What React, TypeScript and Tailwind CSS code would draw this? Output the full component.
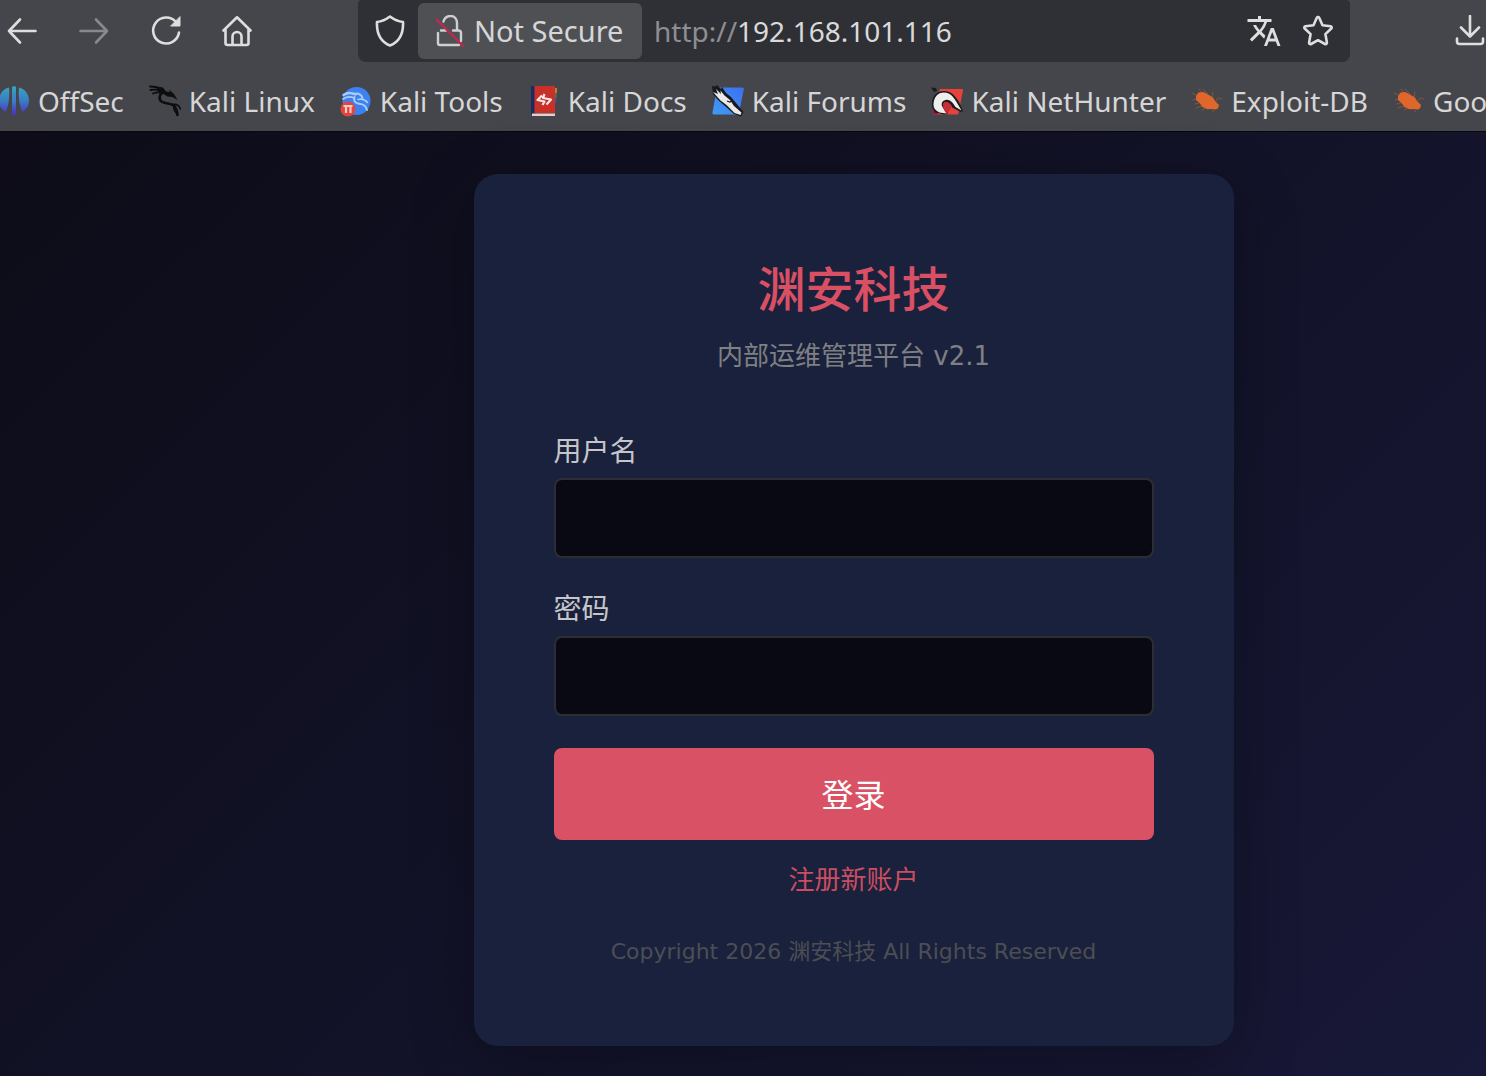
import type { ReactNode } from "react";
import { MdTranslate } from "react-icons/md";

function OffSecIcon() {
  return (
    <svg viewBox="0 0 32 32" className="size-8 shrink-0" aria-hidden="true">
      <defs>
        <linearGradient id="offsec" gradientUnits="userSpaceOnUse" x1="0" y1="1" x2="0" y2="31">
          <stop offset="0" stopColor="#3aa6bd" />
          <stop offset="0.5" stopColor="#3a7cc4" />
          <stop offset="1" stopColor="#5327c8" />
        </linearGradient>
      </defs>
      <path
        fill="url(#offsec)"
        d="M11 2.500C5 4 1 9 1 15.500c0 5 2.500 9 6.500 11.500C10.500 22 12 11 11 2.500zM21 2.500c6 1.500 10 6.500 10 13 0 5-2.500 9-6.500 11.500C21.500 22 20 11 21 2.500z"
      />
      <path fill="url(#offsec)" d="M14 1.500h4v18l-.3 10.500h-3.400L14 19.500z" />
    </svg>
  );
}

function KaliLinuxIcon() {
  return (
    <svg viewBox="0 0 32 32" className="size-8 shrink-0" aria-hidden="true">
      <g fill="none" stroke="#0d0d0f" strokeLinecap="round">
        <path strokeWidth="1.800" d="M1 1.500c5 0 8 .5 11 3M1.500 5c4-.8 7-.5 10 .5M4 8.500c3-1.200 5-1.500 8-1" />
        <path strokeWidth="2.600" d="M14 7c-4 3-4.500 7-1.500 9.500 3.500 2.500 8 1.500 11.500 3.500 3 2 4 5 4.500 10" />
        <path strokeWidth="1.600" d="M23 20c4-1.500 7 .5 8.500 4M25 22c-1 3 1 5 3 7" />
      </g>
      <path
        fill="#0d0d0f"
        d="M8 1.500l6 1 3 4 4 .5-1-2.500 5 4.500 3.500 6-5-3-5-.5-4-2.500-3 .5-3-4z"
      />
    </svg>
  );
}

function KaliToolsIcon() {
  return (
    <svg viewBox="0 0 32 32" className="size-8 shrink-0" aria-hidden="true">
      <circle cx="16.500" cy="16" r="14" fill="#3b82f0" />
      <g fill="none" stroke="#a9cbf5" strokeLinecap="round">
        <path strokeWidth="2.400" d="M3.500 10c4-3 8-2.500 12-.5" />
        <path strokeWidth="1.600" d="M3 14c4-2.500 8-2.500 11-1" />
        <path strokeWidth="2" d="M13 9c4-1 8 0 9.500 4M14.500 12c-1.500 5 2 6.500 6 7 4 .5 5.500 2 6.500 6" />
        <path strokeWidth="1.600" d="M18 14.500c4-1 7 0 9.500 3" />
      </g>
      <circle cx="8" cy="24" r="7.500" fill="#e2453e" />
      <path stroke="#f3c9c5" strokeWidth="2.200" fill="none" d="M3.500 21h9M6 21v7M10.500 21v7" />
    </svg>
  );
}

function KaliDocsIcon() {
  return (
    <svg viewBox="0 0 32 32" className="size-8 shrink-0" aria-hidden="true">
      <path fill="#c9762c" d="M26 3h3v5h-3z" />
      <path fill="#3f7f4c" d="M26 8h2.500v5H26z" />
      <path fill="#35569a" d="M26 13h2.500v5H26z" />
      <path fill="#1c2c5e" d="M3 1h6v29H3z" />
      <path fill="#c83028" d="M6.500 1H27v27H6.500z" />
      <path fill="#e2cfcf" d="M4 28.500h23V31H4z" />
      <path
        fill="none"
        stroke="#f6e9e8"
        strokeWidth="2.200"
        strokeLinejoin="round"
        d="M14 10.500L9.500 15l7 1.500-2 3.500M16.500 9l-1.500 4 8 1.500-4.500 5"
      />
    </svg>
  );
}

function KaliForumsIcon() {
  return (
    <svg viewBox="0 0 32 32" className="size-8 shrink-0" aria-hidden="true">
      <defs>
        <linearGradient id="forums" x1="0" y1="1" x2="1" y2="0">
          <stop offset="0" stopColor="#3f9cf5" />
          <stop offset="1" stopColor="#3c6ff0" />
        </linearGradient>
      </defs>
      <path
        fill="url(#forums)"
        d="M5 2.500h25.500c1 0 1.500.8 1.300 1.800L27 28c-.3 1-1 1.500-2 1.500H2.500C1 29.500.3 29 .5 27.500z"
      />
      <path fill="#17191f" d="M0 1l3 .5L5 0l4 4 1-2 4 6 5 4 5 6 7.500 9-2.500 4.500-7-2.500-9-8-7-6-5-6z" />
      <path
        fill="#e9e9e6"
        d="M1 7l5 2-2-5 5 5-.5-3.500 4 5L18 15l4 6 7.500 6.500-1 2.500-6-2-8-8-6-4.500-4-4.500z"
      />
      <path stroke="#17191f" strokeWidth="1.200" fill="none" d="M15 16l3 1 1.500-1" />
    </svg>
  );
}

function KaliNetHunterIcon() {
  return (
    <svg viewBox="0 0 32 32" className="size-8 shrink-0" aria-hidden="true">
      <path
        fill="#e8433b"
        d="M9 4h22c.8 0 1.200.6 1 1.400L27.500 28c-.2 1-.8 1.500-1.800 1.500H3c-1.500 0-2.300-1-2-2.500z"
      />
      <path fill="#8c1f48" d="M1.500 23l6 6.500H3c-1.500 0-2.300-1-2-2.500z" />
      <path fill="#1b1b1f" d="M0 2.500L5 3l1 3-3 1z" />
      <path
        fill="#1b1b1f"
        d="M1 22C0 12 5 6 13 6c8 0 11 5 15 11l4 9-2 1-8-4-5-5-4 1 1 5 3 5-4 .5-9-2z"
      />
      <path
        fill="#eeeeec"
        d="M2.500 20C2.500 12 7 7.500 13 7.500c7 0 10 5 14 12l3.500 6-6-3.500c-3-5-6-8-10-7-4 .8-4.500 4.500-3 7l4 6.500-7-1C4.500 25.500 2.500 23 2.500 20z"
      />
      <path fill="#c72c3b" d="M12.500 17.500c3-2 6 0 8.500 3.500l-3 5-2 3c-3-3-5-8-3.500-11.500z" />
    </svg>
  );
}

function ExploitIcon() {
  return (
    <svg viewBox="0 0 32 32" className="size-8 shrink-0" aria-hidden="true">
      <path
        fill="none"
        stroke="#86533c"
        strokeWidth="1"
        strokeLinecap="round"
        d="M11 8L8 4M17 9l-5-5M5 10L1 8M6 14l-4 1M8 18l-4 1M11 21l-6 2M15 23l-4 2M21 12l1-5M25 16l2-3 4 1M21 25l2 2"
      />
      <path
        fill="#e0672b"
        d="M5 11l2.500-3.500 5-.5 4.500 2.500 5 3 2 3.500 4 4-1 3.500-2.500 1-4-.5-4 .3-5-2.300-3-4-3.500-3z"
      />
    </svg>
  );
}

const bookmarks: { id: number; label: string; icon: ReactNode }[] = [
  { id: 1, label: "OffSec", icon: <OffSecIcon /> },
  { id: 2, label: "Kali Linux", icon: <KaliLinuxIcon /> },
  { id: 3, label: "Kali Tools", icon: <KaliToolsIcon /> },
  { id: 4, label: "Kali Docs", icon: <KaliDocsIcon /> },
  { id: 5, label: "Kali Forums", icon: <KaliForumsIcon /> },
  { id: 6, label: "Kali NetHunter", icon: <KaliNetHunterIcon /> },
  { id: 7, label: "Exploit-DB", icon: <ExploitIcon /> },
  { id: 8, label: "Goo", icon: <ExploitIcon /> },
];

function ToolButton({
  label,
  disabled,
  children,
}: {
  label: string;
  disabled?: boolean;
  children: ReactNode;
}) {
  return (
    <button
      type="button"
      aria-label={label}
      disabled={disabled}
      className="shrink-0 text-[#dededf] disabled:text-[#89898c]"
    >
      <svg
        viewBox="0 0 32 32"
        className="size-8"
        fill="none"
        stroke="currentColor"
        strokeWidth="2.600"
        strokeLinecap="round"
        strokeLinejoin="round"
      >
        {children}
      </svg>
    </button>
  );
}

function BrowserBar() {
  return (
    <header className="overflow-hidden border-b border-[#08080c] bg-[#45464b] font-['Noto_Sans',sans-serif] text-[28px] text-[#d6d6d7]">
      <div className="flex h-[62px] items-center pl-1.5">
        <nav aria-label="Navigation" className="flex gap-10">
          <ToolButton label="Back">
            <path d="M29.500 16H3M14 4.500L3 16l11 11.500" />
          </ToolButton>
          <ToolButton label="Forward" disabled>
            <path d="M2.500 16H29M18 4.500L29 16 18 27.500" />
          </ToolButton>
          <ToolButton label="Reload">
            <path d="M29 17.500A13 13 0 1 1 26 7" />
            <path d="M30 2v9h-9z" fill="currentColor" strokeWidth="1" />
          </ToolButton>
          <ToolButton label="Home">
            <path d="M1.500 15.500L15 2.300 28.500 15.500M3.500 14V28c0 1.300.8 2 2 2h19c1.200 0 2-.7 2-2V14" />
            <path d="M10.500 29.500V21.500a4.500 4.500 0 0 1 9 0v8" />
          </ToolButton>
        </nav>
        <div className="mx-[104px] flex h-full flex-1 items-center gap-3 rounded-t-sm rounded-b-lg bg-[#2f3035] pr-4 pl-4">
          <ToolButton label="Tracking protection">
            <path d="M16 1.500c4 3 8.500 5 13 5.500C29.500 18 26 26.500 16 30.500 6 26.500 2.500 18 3 7c4.500-.5 9-2.500 13-5.500z" />
          </ToolButton>
          <button
            type="button"
            className="flex h-14 w-56 shrink-0 items-center gap-2 rounded-md bg-[#4f5054] pl-4 text-[29px]"
          >
            <svg viewBox="0 0 32 32" className="size-8 shrink-0" fill="none" aria-hidden="true">
              <path
                stroke="#cfcfd1"
                strokeWidth="2.400"
                strokeLinecap="round"
                d="M9.500 6.500C10.500 3 13 1 16.500 1 20.500 1 23 4 23 8v7.500M4 18v10c0 1.300.7 2 2 2H25M7 15.500h5M27 26V18c0-1.500-1-2.500-2.500-2.500H19"
              />
              <path stroke="#c4284e" strokeWidth="2.200" strokeLinecap="round" d="M2.500 4.500L29 31" />
            </svg>
            Not Secure
          </button>
          <label className="flex flex-1 items-center text-[#8e8e91]">
            http://
            <input
              aria-label="Address"
              defaultValue="192.168.101.116"
              className="min-w-0 flex-1 bg-transparent text-[#dadadb] outline-none"
            />
          </label>
          <div className="flex gap-5">
            <button type="button" aria-label="Translate page" className="text-[#dededf]">
              <MdTranslate className="size-9" />
            </button>
            <ToolButton label="Bookmark this page">
              <path d="M14.800 2.800c.5-1 1.900-1 2.400 0l3.300 7.400 8 1c1.200.2 1.600 1.500.8 2.300l-5.900 5.600 1.500 8.500c.2 1.200-.9 2-2 1.400L16 25.200 9.100 29c-1.100.6-2.200-.2-2-1.400l1.500-8.500-5.900-5.600c-.8-.8-.4-2.100.8-2.300l8-1z" />
            </ToolButton>
          </div>
        </div>
        <ToolButton label="Downloads">
          <path d="M16 1v20M7 12.500l9 9 9-9M3 23.500v3c0 1.500 1 2.500 2.500 2.500h21c1.500 0 2.500-1 2.500-2.500v-3" />
        </ToolButton>
      </div>
      <ul className="-ml-0.5 flex h-[69px] items-center gap-[25px] whitespace-nowrap">
        {bookmarks.map((b) => (
          <li key={b.id}>
            <a href="#" className="flex items-center gap-2 pt-2 leading-10">
              {b.icon}
              {b.label}
            </a>
          </li>
        ))}
      </ul>
    </header>
  );
}

function Field({ id, label, type }: { id: string; label: string; type: string }) {
  return (
    <div className="mb-8">
      <label htmlFor={id} className="mb-1.5 block text-[28px] leading-10 text-[#c5c6cb]">
        {label}
      </label>
      <input
        id={id}
        type={type}
        className="block h-20 w-full rounded-lg border-2 border-[#2d2e33] bg-[#090914] px-6 text-[28px] text-white outline-none"
      />
    </div>
  );
}

export default function App() {
  return (
    <div className="flex min-h-screen flex-col overflow-hidden">
      <BrowserBar />
      <main className="flex flex-1 items-start justify-center bg-linear-135 from-[#0d0c18] to-[#181838] pt-[42px] pb-[30px] pl-[221px] font-['DejaVu_Sans','Noto_Sans_CJK_SC',sans-serif]">
        <section className="w-[760px] rounded-3xl bg-[#1a213c] p-20 text-center shadow-[0_16px_64px_rgba(0,0,0,0.3)]">
          <h1 className="text-[48px] leading-[72px] font-medium text-[#d95064]">渊安科技</h1>
          <p className="mb-14 pt-2.5 text-[26px] leading-10 text-[#7f8083]">内部运维管理平台 v2.1</p>
          <form className="text-left" onSubmit={(e) => e.preventDefault()}>
            <Field id="username" label="用户名" type="text" />
            <Field id="password" label="密码" type="password" />
            <button
              type="submit"
              className="h-[92px] w-full rounded-lg bg-[#d95164] pt-1 text-[32px] text-white"
            >
              登录
            </button>
          </form>
          <a href="#" className="mt-5 block text-[26px] leading-10 text-[#cb4d61]">
            注册新账户
          </a>
          <p className="mt-[38px] text-[22px] leading-7 text-[#4c4e55]">
            Copyright 2026 渊安科技 All Rights Reserved
          </p>
        </section>
      </main>
    </div>
  );
}
